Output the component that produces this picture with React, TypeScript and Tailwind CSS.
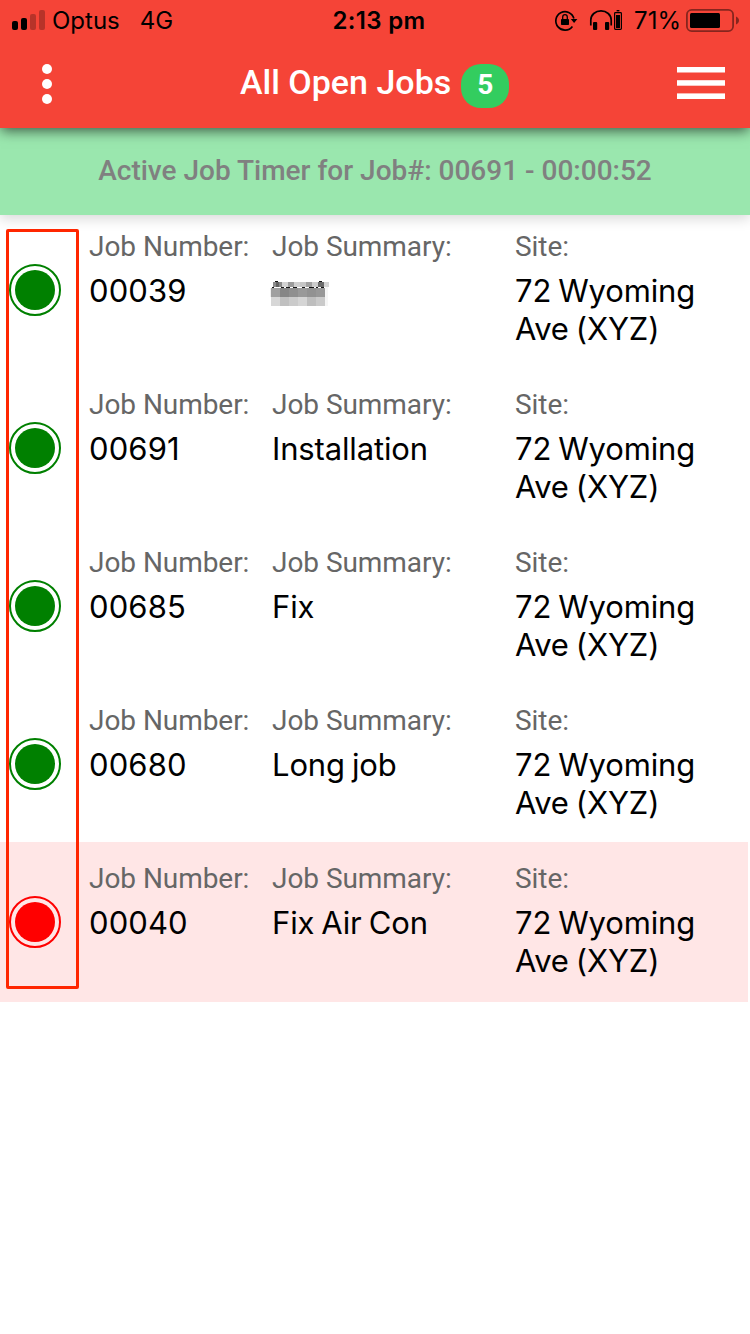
import React from "react";

const SF = "font-[Inter,'Liberation_Sans',sans-serif]";

type Job = { number: string; summary: string | null; site: string[]; overdue?: boolean };

const site = ["72 Wyoming", "Ave (XYZ)"];

const jobs: Job[] = [
  { number: "00039", summary: null, site },
  { number: "00691", summary: "Installation", site },
  { number: "00685", summary: "Fix", site },
  { number: "00680", summary: "Long job", site },
  { number: "00040", summary: "Fix Air Con", site, overdue: true },
];

function SignalBars() {
  return (
    <svg className="h-5 w-[33px]" viewBox="0 0 33 20">
      <rect x="0" y="11" width="6" height="9" rx="2" />
      <rect x="9" y="8" width="6" height="12" rx="2" />
      <rect x="18" y="4" width="6" height="16" rx="2" opacity="0.25" />
      <rect x="27" y="0" width="6" height="20" rx="2" opacity="0.25" />
    </svg>
  );
}

function StatusIcons() {
  return (
    <svg className="h-6 w-[70px]" viewBox="554 8 70 24">
      <path d="M572.4 26.4A9.2 9.2 0 1 1 573.9 18.5" fill="none" stroke="black" strokeWidth="1.7" />
      <path d="M570.8 19h6.6l-3.3 4z" />
      <rect x="561" y="19" width="8" height="6" rx="0.8" />
      <path d="M562.7 19v-2a2.3 2.3 0 0 1 4.6 0v2" fill="none" stroke="black" strokeWidth="1.3" />
      <path d="M590.8 25.5V20a10.2 9.2 0 0 1 20.4 0v5.5" fill="none" stroke="black" strokeWidth="1.7" />
      <rect x="593" y="22" width="4.2" height="8" rx="1" />
      <rect x="605" y="22" width="4.2" height="8" rx="1" />
      <rect x="614.6" y="12.6" width="6.8" height="16.8" rx="0.8" fill="none" stroke="black" strokeWidth="1.2" />
      <rect x="616" y="15" width="4" height="13" />
      <rect x="616.6" y="10" width="2.8" height="1.4" />
    </svg>
  );
}

function Battery() {
  return (
    <svg className="h-6 w-[54px]" viewBox="686 8 54 24">
      <rect x="686.9" y="9.9" width="46.2" height="21.2" rx="4.8" fill="none" stroke="black" strokeOpacity="0.45" strokeWidth="1.8" />
      <rect x="690" y="13" width="30" height="15" rx="1.5" />
      <path d="M736 16.5c4 1.5 4 6.5 0 8z" opacity="0.45" />
    </svg>
  );
}

const mosaicMiddle = ["#a0a0a0", "#868686", "#8f8f8f", "#999999", "#929292", "#989898"];
const mosaicBottom = ["#d7d7d7", "#c0c0c0", "#cbcbcb", "#d5d5d5", "#bebebe", "#cacaca"];
const mosaicTop = [
  { x: 2, w: 3, c: "#8c8c8c" },
  { x: 5, w: 3, c: "#626262" },
  { x: 8, w: 3, c: "#8a8a8a" },
  { x: 11, w: 6, c: "#d2d2d2" },
  { x: 17, w: 6, c: "#9b9b9b" },
  { x: 23, w: 6, c: "#cfcfcf" },
  { x: 29, w: 6, c: "#c6c6c6" },
  { x: 35, w: 6, c: "#a0a0a0" },
  { x: 41, w: 6, c: "#cdcdcd" },
  { x: 47, w: 6, c: "#6b6b6b" },
  { x: 53, w: 5, c: "#d4d4d4" },
];

function RedactedSummary() {
  return (
    <svg className="-ml-[3px] h-[38px] w-[64px]" viewBox="-2 -9 64 38" shapeRendering="crispEdges">
      <rect x="-1" y="7" width="1" height="9" fill="#f0f0f0" />
      <rect x="54" y="6" width="3" height="19" fill="#f5f5f5" />
      {mosaicTop.map((cell) => (
        <rect key={cell.x} x={cell.x} y="1" width={cell.w} height="5" fill={cell.c} />
      ))}
      {mosaicMiddle.map((c, i) => (
        <rect key={i} x={i * 9} y="7" width="9" height="9" fill={c} />
      ))}
      {mosaicBottom.map((c, i) => (
        <rect key={i} x={i * 9} y="16" width="9" height="9" fill={c} />
      ))}
      <path d="M4 0h3v1H4zM48 0h3v1h-3zM1 6h2v1H1zM10 6h3v1h-3zM15 6h4v1h-4zM22 6h4v1h-4zM31 6h3v1h-3zM38 6h5v1h-5zM45 6h2v1h-2zM50 6h3v1h-3z" fill="#111" />
    </svg>
  );
}

function Label({ children }: { children: React.ReactNode }) {
  return (
    <div className="font-[Roboto,sans-serif] text-[28px] leading-[38px] tracking-[-0.05px] text-[#666]">{children}</div>
  );
}

function Value({ children }: { children: React.ReactNode }) {
  return (
    <div className={`${SF} text-[31px] leading-[38px] tracking-[-0.15px] text-black [word-spacing:-1.5px]`}>
      {children}
    </div>
  );
}

function JobRow({ job }: { job: Job }) {
  return (
    <div
      className={`grid grid-cols-[89px_183px_243px_1fr] pt-[18px] ${
        job.overdue ? "mr-0.5 h-[160px] bg-[#ffe6e6]" : "h-[158px]"
      }`}
    >
      <div className="pt-9 pl-[9px]">
        <svg className={`size-[52px] ${job.overdue ? "text-[#ff0000]" : "text-[#008000]"}`} viewBox="0 0 52 52">
          <circle cx="26" cy="26" r="25" fill="none" stroke="currentColor" strokeWidth="2" />
          <circle cx="26" cy="26" r="20" fill="currentColor" />
        </svg>
      </div>
      <div className="flex flex-col gap-1.5">
        <Label>Job Number:</Label>
        <div className={`${SF} text-[31px] leading-[38px] tracking-[0.1px] text-black`}>{job.number}</div>
      </div>
      <div className="flex flex-col gap-1.5">
        <Label>Job Summary:</Label>
        {job.summary === null ? <RedactedSummary /> : <Value>{job.summary}</Value>}
      </div>
      <div className="flex flex-col gap-1.5">
        <Label>Site:</Label>
        <Value>
          {job.site.map((line) => (
            <div key={line}>{line}</div>
          ))}
        </Value>
      </div>
    </div>
  );
}

export default function App() {
  return (
    <div className="relative h-[1334px] w-[750px] overflow-hidden bg-white">
      <header className="relative z-20 h-32 bg-[#f54437] shadow-[0_4px_12px_-1px_rgba(0,0,0,0.6)]">
        <div className={`${SF} grid h-10 grid-cols-3 items-center text-[24px] text-black`}>
          <div className="flex items-center pl-3">
            <SignalBars />
            <span className="ml-[7px] pt-0.5">Optus</span>
            <span className="ml-5 pt-0.5">4G</span>
          </div>
          <div className="pt-0.5 pl-2 text-center font-semibold tracking-[0.3px]">2:13 pm</div>
          <div className="flex items-center justify-end pr-[10px]">
            <StatusIcons />
            <span className="mr-[5px] ml-[10px] pt-0.5">71%</span>
            <Battery />
          </div>
        </div>
        <div className="flex h-[88px] items-center pr-[25px] pl-[42px]">
          <svg className="h-10 w-[10px] fill-white" viewBox="0 0 10 40">
            <circle cx="5" cy="5" r="5" />
            <circle cx="5" cy="20" r="5" />
            <circle cx="5" cy="35" r="5" />
          </svg>
          <div className="ml-[188px] flex items-center gap-[10px] font-[Roboto,sans-serif] font-medium text-white">
            <h1 className="pb-1 text-[34px]">All Open Jobs</h1>
            <span className="mt-1 flex h-11 w-12 items-center justify-center rounded-[20px] bg-[#33cd5f] pb-[3px] text-[28px] font-bold">
              5
            </span>
          </div>
          <svg className="mb-0.5 ml-auto h-8 w-12 fill-white" viewBox="0 0 48 32">
            <rect width="48" height="5.5" />
            <rect y="13.2" width="48" height="5.5" />
            <rect y="26.4" width="48" height="5.6" />
          </svg>
        </div>
      </header>
      <div className="relative z-10 flex h-[87px] items-center justify-center bg-[#9ae7ae] pb-0.5 font-[Roboto,sans-serif] text-[28px] font-medium text-[#808080] shadow-[0_4px_12px_rgba(0,0,0,0.15)]">
        Active Job Timer for Job#: 00691 - 00:00:52
      </div>
      <main className="-mt-[5px]">
        {jobs.map((job) => (
          <JobRow key={job.number} job={job} />
        ))}
      </main>
      <div className="absolute top-[229px] left-[6px] z-20 h-[760px] w-[73px] rounded-[2px] border-[3px] border-[#ff2600]" />
    </div>
  );
}
